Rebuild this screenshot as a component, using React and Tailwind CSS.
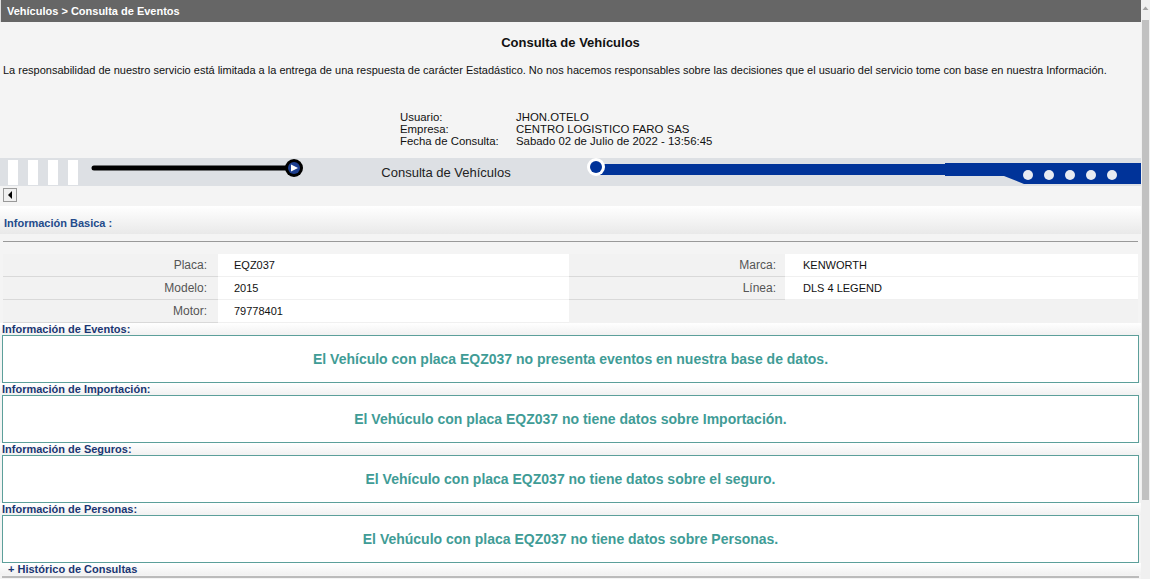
import React from "react";

const FONT = { fontFamily: '"Liberation Sans", Arial, sans-serif' };

function LeftSlider() {
  return (
    <svg width="216" height="28" viewBox="0 0 216 28" className="shrink-0">
      <line x1="4" y1="10" x2="200" y2="10" stroke="#000" strokeWidth="5" strokeLinecap="round" />
      <circle cx="204" cy="10" r="9" fill="#000" />
      <circle cx="204" cy="10" r="6" fill="#1d3f8f" />
      <polygon points="201,6.5 201,13.5 208,10" fill="#fff" />
    </svg>
  );
}

function RightSlider() {
  return (
    <svg width="555" height="28" viewBox="0 0 555 28" className="shrink-0">
      <rect x="12" y="6" width="350" height="11" fill="#003399" />
      <polygon points="359,5 555,5 555,26 438,26 418,18 359,18" fill="#003399" />
      <circle cx="10" cy="9" r="9" fill="#fff" />
      <circle cx="10" cy="9" r="6" fill="#003399" />
      {[442, 463, 484, 505, 526].map((x) => (
        <circle key={x} cx={x} cy="17" r="5" fill="#e8ebf2" />
      ))}
    </svg>
  );
}

function Section({ title, message }) {
  return (
    <div className="flex flex-col">
      <div className="h-[12px] leading-[12px] text-[11px] font-bold text-[#1a3672] pl-[2px] bg-gradient-to-b from-[#ffffff] to-[#f1f1f1]">
        {title}
      </div>
      <div className="mx-[2px] h-[48px] border border-[#5c9f9a] bg-white flex items-center justify-center">
        <span className="text-[14px] font-bold text-[#3f9c96]">{message}</span>
      </div>
    </div>
  );
}

export default function App() {
  const rows = [
    ["Placa:", "EQZ037", "Marca:", "KENWORTH"],
    ["Modelo:", "2015", "Línea:", "DLS 4 LEGEND"],
    ["Motor:", "79778401", "", ""],
  ];
  return (
    <div className="w-[1150px] h-[579px] overflow-hidden flex bg-[#f4f4f4]" style={FONT}>
      <div className="w-[1141px] flex flex-col shrink-0">
        <div className="h-[22px] bg-[#666666] text-white font-bold text-[11px] pl-[6px] flex items-center border-l border-[#dddddd]">
          Vehículos &gt; Consulta de Eventos
        </div>
        <div className="pt-[13px] h-[16px] box-content leading-[16px] text-center font-bold text-[13px] text-[#111]">
          Consulta de Vehículos
        </div>
        <div className="mt-[12px] pl-[3px] text-[11px] leading-[14px] text-[#111]">
          La responsabilidad de nuestro servicio está limitada a la entrega de una respuesta de carácter Estadástico. No nos hacemos responsables sobre las decisiones que el usuario del servicio tome con base en nuestra Información.
        </div>
        <div className="mt-[34px] pl-[400px] grid grid-cols-[116px_1fr] text-[11.4px] leading-[12px] text-[#111]">
          <span>Usuario:</span>
          <span>JHON.OTELO</span>
          <span>Empresa:</span>
          <span>CENTRO LOGISTICO FARO SAS</span>
          <span>Fecha de Consulta:</span>
          <span>Sabado 02 de Julio de 2022 - 13:56:45</span>
        </div>
        <div className="mt-[11px] h-[28px] bg-[#dde0e4] flex items-stretch">
          <div className="pl-[8px] pt-[2px] pb-[1px] flex gap-[10px]">
            {[0, 1, 2, 3].map((i) => (
              <div key={i} className="w-[10px] bg-white" />
            ))}
          </div>
          <div className="ml-[12px] flex">
            <LeftSlider />
          </div>
          <div className="w-[280px] flex items-center justify-center text-[13px] text-[#222] pt-[2px]">
            Consulta de Vehículos
          </div>
          <RightSlider />
        </div>
        <div className="mt-[2px] ml-[3px] w-[14px] h-[14px] border border-[#999] bg-[#f0f0f0] flex items-center justify-center">
          <svg width="6" height="8" viewBox="0 0 6 8">
            <polygon points="5,0 5,8 1,4" fill="#000" />
          </svg>
        </div>
        <div className="mt-[4px] h-[28px] pt-[10px] pl-[4px] bg-gradient-to-b from-[#ffffff] to-[#e9e9e9] text-[11px] leading-[14px] font-bold text-[#234b8b]">
          Información Basica :
        </div>
        <div className="mt-[7px] mx-[3px] h-px bg-[#999999]" />
        <div className="mt-[12px] ml-[3px] grid grid-cols-[215px_351px_216px_353px] text-[11px]">
          {rows.map((r, i) => (
            <React.Fragment key={i}>
              <div className="h-[23px] flex items-center justify-end pr-[11px] bg-[#f2f2f2] text-[12px] text-[#555] border-b border-[#d9d9d9]">
                {r[0]}
              </div>
              <div className="h-[23px] flex items-center pl-[16px] bg-white text-[#111] border-b border-[#f0f0f0]">
                {r[1]}
              </div>
              <div className={`h-[23px] flex items-center justify-end pr-[9px] bg-[#f2f2f2] text-[12px] text-[#555] ${i < 2 ? "border-b border-[#d9d9d9]" : ""}`}>
                {r[2]}
              </div>
              <div className={`h-[23px] flex items-center pl-[18px] text-[#111] ${r[3] ? "bg-white border-b border-[#f0f0f0]" : "bg-[#f2f2f2]"}`}>
                {r[3]}
              </div>
            </React.Fragment>
          ))}
        </div>
        <Section title="Información de Eventos:" message="El Vehículo con placa EQZ037 no presenta eventos en nuestra base de datos." />
        <Section title="Información de Importación:" message="El Vehúculo con placa EQZ037 no tiene datos sobre Importación." />
        <Section title="Información de Seguros:" message="El Vehículo con placa EQZ037 no tiene datos sobre el seguro." />
        <Section title="Información de Personas:" message="El Vehúculo con placa EQZ037 no tiene datos sobre Personas." />
        <div className="h-[12px] leading-[12px] text-[11px] font-bold text-[#1a3672] pl-[8px] bg-gradient-to-b from-[#ffffff] to-[#f1f1f1]">
          + Histórico de Consultas
        </div>
        <div className="mt-[1px] mx-[2px] h-[2px] bg-[#bbbbbb]" />
      </div>
      <div className="w-[9px] bg-[#f0f0f0] flex flex-col items-center">
        <svg width="7" height="8" viewBox="0 0 7 8" className="mt-[4px]">
          <polygon points="0.5,6 6.5,6 3.5,2.5" fill="#a3a3a3" />
        </svg>
        <div className="mt-[8px] w-[7px] h-[480px] bg-[#c1c1c1]" />
      </div>
    </div>
  );
}
